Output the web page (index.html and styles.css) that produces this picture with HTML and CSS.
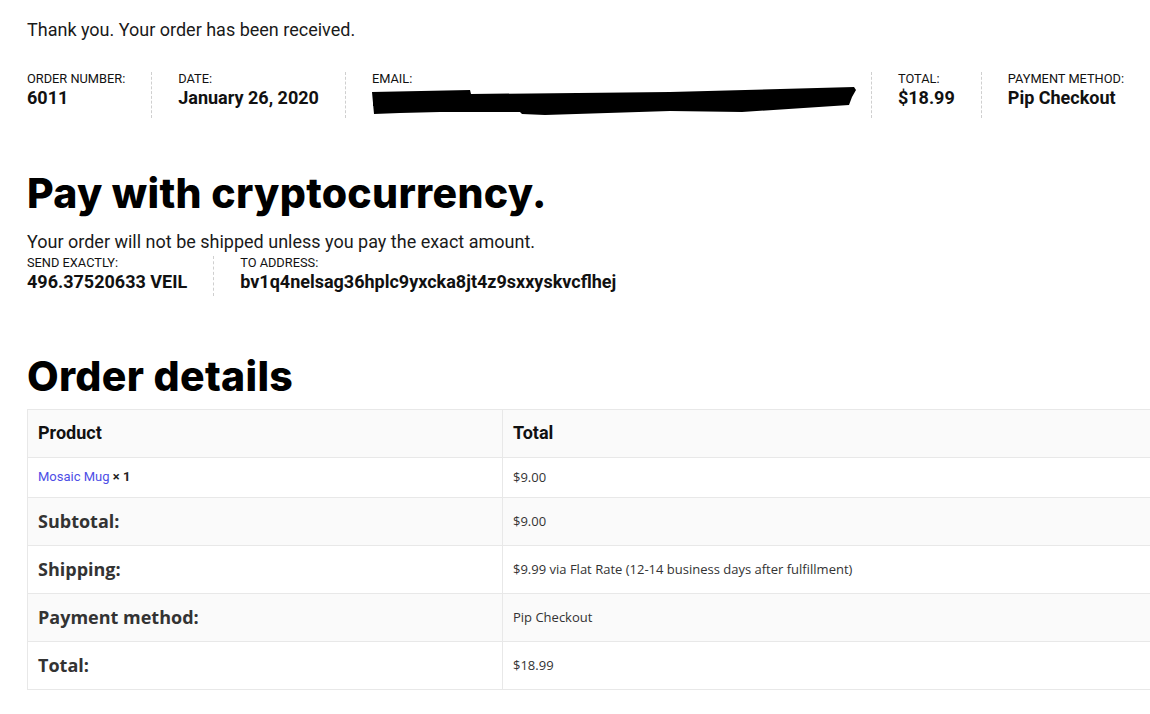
FILE: index.html
```html
<!DOCTYPE html>
<html lang="en">
<head>
<meta charset="utf-8">
<title>Order received</title>
<link rel="stylesheet" href="styles.css">
</head>
<body>
<main class="page">
  <p class="notice">Thank you. Your order has been received.</p>

  <ul class="overview">
    <li class="ov-item">
      <span class="ov-label">Order number:</span>
      <strong class="ov-value">6011</strong>
    </li>
    <li class="ov-item">
      <span class="ov-label">Date:</span>
      <strong class="ov-value">January 26, 2020</strong>
    </li>
    <li class="ov-item ov-email">
      <span class="ov-label">Email:</span>
      <svg class="redact" width="486" height="30" viewBox="0 0 486 30" aria-hidden="true">
        <path d="M2 6 L100 4 L101 8 L300 6 L484 1 L486 4 L482 11 L479 19 L372 26 L300 25 L175 29 L152 28 L150 26 L70 26 L30 27 L4 28 Z" fill="#000"/>
        <path d="M3 10 Q60 18 150 14 L160 20 Q80 22 3 20 Z" fill="#000"/>
      </svg>
    </li>
    <li class="ov-item">
      <span class="ov-label">Total:</span>
      <strong class="ov-value">$18.99</strong>
    </li>
    <li class="ov-item">
      <span class="ov-label">Payment method:</span>
      <strong class="ov-value">Pip Checkout</strong>
    </li>
  </ul>

  <h2 class="title crypto-title">Pay with cryptocurrency.</h2>
  <p class="warn">Your order will not be shipped unless you pay the exact amount.</p>
  <ul class="overview crypto">
    <li class="ov-item">
      <span class="ov-label">Send exactly:</span>
      <strong class="ov-value">496.37520633 VEIL</strong>
    </li>
    <li class="ov-item">
      <span class="ov-label">To address:</span>
      <strong class="ov-value">bv1q4nelsag36hplc9yxcka8jt4z9sxxyskvcflhej</strong>
    </li>
  </ul>

  <h2 class="title details-title">Order details</h2>
  <table class="details">
    <thead>
      <tr class="shade">
        <th class="col-product">Product</th>
        <th>Total</th>
      </tr>
    </thead>
    <tbody>
      <tr class="item-row">
        <td><a class="link" href="#">Mosaic Mug</a> <strong class="qty">× 1</strong></td>
        <td class="val">$9.00</td>
      </tr>
    </tbody>
    <tfoot>
      <tr class="shade">
        <th class="foot-label">Subtotal:</th>
        <td class="val">$9.00</td>
      </tr>
      <tr>
        <th class="foot-label">Shipping:</th>
        <td class="val">$9.99&nbsp;<span class="via">via Flat Rate (12-14 business days after fulfillment)</span></td>
      </tr>
      <tr class="shade">
        <th class="foot-label">Payment method:</th>
        <td class="val">Pip Checkout</td>
      </tr>
      <tr>
        <th class="foot-label">Total:</th>
        <td class="val">$18.99</td>
      </tr>
    </tfoot>
  </table>
</main>
</body>
</html>
```

FILE: styles.css
```css
html, body {
  margin: 0;
  padding: 0;
  overflow-x: hidden;
  background: #fff;
}

body {
  font-family: Roboto, "Liberation Sans", Arial, sans-serif;
  color: #111;
}

.page {
  padding: 18px 0 40px 27px;
}

.notice {
  margin: 0;
  font-size: 18px;
  line-height: 24px;
  color: #1a1a1a;
}

.overview {
  list-style: none;
  margin: 30px 0 0;
  padding: 0;
  display: flex;
  align-items: stretch;
}

.ov-item {
  flex: none;
  display: flex;
  flex-direction: column;
  white-space: nowrap;
  padding: 0 26px 2px 26px;
  border-right: 1px dashed #cfcfcf;
}

.ov-item:first-child {
  padding-left: 0;
}

.ov-item:last-child {
  border-right: none;
}

.ov-label {
  font-size: 12.8px;
  line-height: 14px;
  text-transform: uppercase;
  color: #111;
}

.ov-value {
  font-size: 18px;
  line-height: 24px;
  font-weight: 700;
  color: #111;
}

.ov-email {
  padding-right: 15px;
}

.redact {
  display: block;
  margin-left: -2px;
}

.title {
  margin: 0;
  font-family: Inter, "Open Sans", sans-serif;
  font-weight: 800;
  font-size: 41px;
  line-height: 48px;
  color: #000;
  letter-spacing: 0.3px;
}

.crypto-title {
  margin-top: 51px;
}

.warn {
  margin: 13px 0 0;
  font-size: 18px;
  line-height: 24px;
  color: #1a1a1a;
}

.crypto {
  margin-top: 2px;
}

.details-title {
  margin-top: 56px;
}

.details {
  margin-top: 9px;
  width: 1200px;
  border-collapse: collapse;
  border: 1px solid #e8e8e8;
}

.details th,
.details td {
  border: 1px solid #e8e8e8;
  padding: 11px 10px 12px;
  text-align: left;
  vertical-align: middle;
}

.col-product {
  width: 454px;
}

.details thead th {
  font-size: 18px;
  line-height: 24px;
  font-weight: 700;
  color: #111;
}

.shade {
  background: #fafafa;
}

.item-row td {
  font-size: 13px;
  line-height: 16px;
}

.link {
  color: #4d4ee6;
  text-decoration: none;
  font-family: Roboto, sans-serif;
}

.qty {
  font-weight: 700;
  color: #222;
}

.val {
  font-family: "Open Sans", sans-serif;
  font-size: 13px;
  line-height: 24px;
  color: #333;
}

.item-row .val {
  line-height: 16px;
}

.foot-label {
  font-family: "Open Sans", sans-serif;
  font-size: 18px;
  line-height: 24px;
  font-weight: 700;
  color: #333;
}

.via {
  color: #333;
}
```
